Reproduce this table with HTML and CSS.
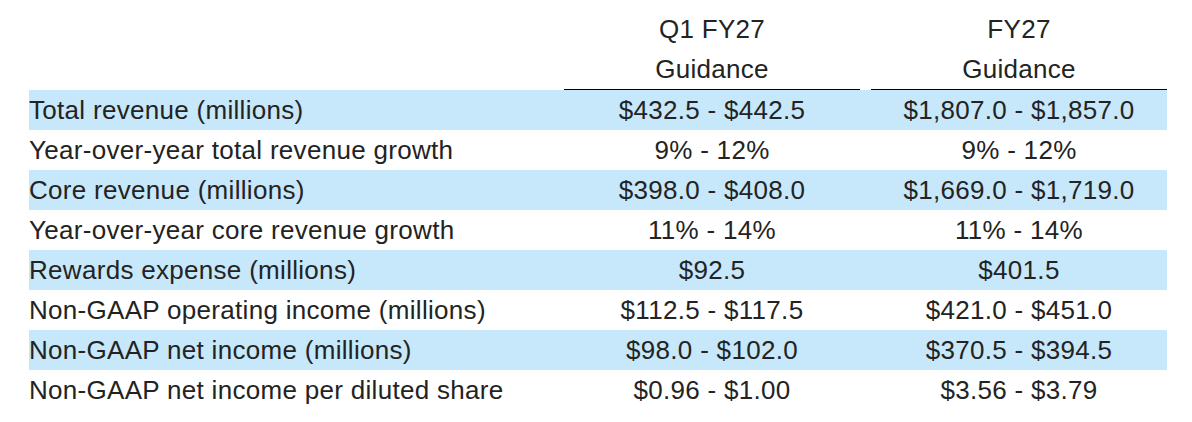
FILE: index.html
```html
<!DOCTYPE html>
<html lang="en">
<head>
<meta charset="utf-8">
<title>Guidance</title>
<link rel="stylesheet" href="styles.css">
</head>
<body>
<div class="wrap">
<table class="guidance">
  <colgroup>
    <col class="c-label">
    <col class="c-val">
    <col class="c-gap">
    <col class="c-val">
  </colgroup>
  <thead>
    <tr>
      <th class="blank"></th>
      <th class="head">Q1 FY27<br>Guidance</th>
      <th class="gap"></th>
      <th class="head">FY27<br>Guidance</th>
    </tr>
  </thead>
  <tbody>
    <tr class="shade"><td class="label">Total revenue (millions)</td><td class="val">$432.5 - $442.5</td><td></td><td class="val">$1,807.0 - $1,857.0</td></tr>
    <tr><td class="label">Year-over-year total revenue growth</td><td class="val">9% - 12%</td><td></td><td class="val">9% - 12%</td></tr>
    <tr class="shade"><td class="label">Core revenue (millions)</td><td class="val">$398.0 - $408.0</td><td></td><td class="val">$1,669.0 - $1,719.0</td></tr>
    <tr><td class="label">Year-over-year core revenue growth</td><td class="val">11% - 14%</td><td></td><td class="val">11% - 14%</td></tr>
    <tr class="shade"><td class="label">Rewards expense (millions)</td><td class="val">$92.5</td><td></td><td class="val">$401.5</td></tr>
    <tr><td class="label">Non-GAAP operating income (millions)</td><td class="val">$112.5 - $117.5</td><td></td><td class="val">$421.0 - $451.0</td></tr>
    <tr class="shade"><td class="label">Non-GAAP net income (millions)</td><td class="val">$98.0 - $102.0</td><td></td><td class="val">$370.5 - $394.5</td></tr>
    <tr><td class="label">Non-GAAP net income per diluted share</td><td class="val">$0.96 - $1.00</td><td></td><td class="val">$3.56 - $3.79</td></tr>
  </tbody>
</table>
</div>
</body>
</html>
```
FILE: styles.css
```css
html, body {
  margin: 0;
  padding: 0;
  background: #ffffff;
}

.wrap {
  padding: 9px 0 0 29px;
}

.guidance {
  border-collapse: collapse;
  table-layout: fixed;
  width: 1138px;
  font-family: "Liberation Sans", Arial, Helvetica, sans-serif;
  font-size: 26px;
  letter-spacing: 0.3px;
  line-height: 40px;
  color: #232323;
}

.c-label { width: 535px; }
.c-val { width: 296px; }
.c-gap { width: 11px; }

.guidance th,
.guidance td {
  padding: 0;
  white-space: nowrap;
}

.guidance th {
  font-weight: normal;
  text-align: center;
  vertical-align: bottom;
}

.guidance th.head {
  border-bottom: 1px solid #000000;
}

.guidance td.label {
  text-align: left;
}

.guidance td.val {
  text-align: center;
}

.guidance tr.shade {
  background: #c7e7fa;
}
```
